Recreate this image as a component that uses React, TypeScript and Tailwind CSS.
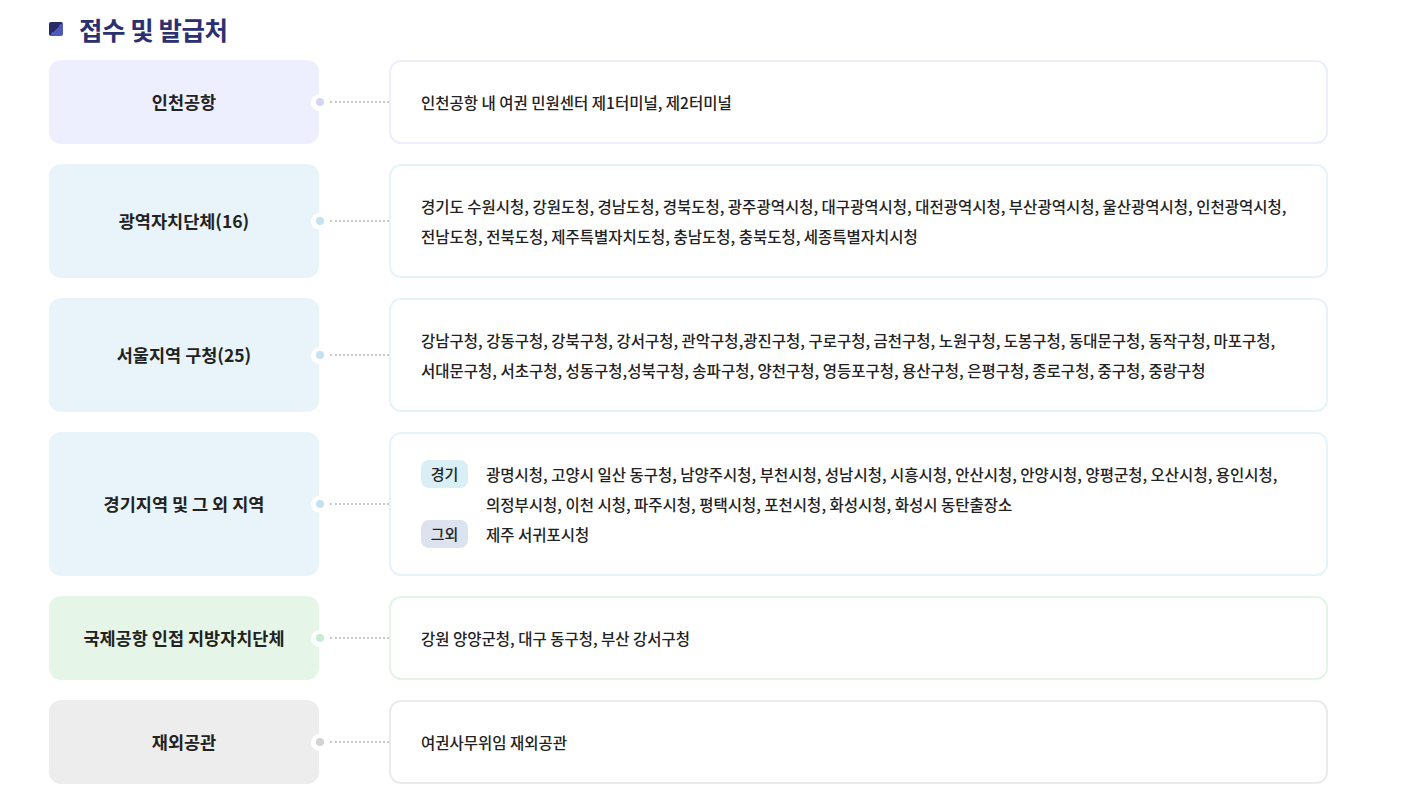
const rows = [
  {
    label: "인천공항",
    box: "bg-[#eeeffe]",
    dot: "bg-[#d4d6f5]",
    border: "border-[#eceefd]",
    lines: ["인천공항 내 여권 민원센터 제1터미널, 제2터미널"],
  },
  {
    label: "광역자치단체(16)",
    box: "bg-[#e8f4f9]",
    dot: "bg-[#c5e3ee]",
    border: "border-[#e6f3f8]",
    lines: [
      "경기도 수원시청, 강원도청, 경남도청, 경북도청, 광주광역시청, 대구광역시청, 대전광역시청, 부산광역시청, 울산광역시청, 인천광역시청,",
      "전남도청, 전북도청, 제주특별자치도청, 충남도청, 충북도청, 세종특별자치시청",
    ],
  },
  {
    label: "서울지역 구청(25)",
    box: "bg-[#e8f4f9]",
    dot: "bg-[#c5e3ee]",
    border: "border-[#e6f3f8]",
    lines: [
      "강남구청, 강동구청, 강북구청, 강서구청, 관악구청,광진구청, 구로구청, 금천구청, 노원구청, 도봉구청, 동대문구청, 동작구청, 마포구청,",
      "서대문구청, 서초구청, 성동구청,성북구청, 송파구청, 양천구청, 영등포구청, 용산구청, 은평구청, 종로구청, 중구청, 중랑구청",
    ],
  },
];

const bottomRows = [
  {
    label: "국제공항 인접 지방자치단체",
    box: "bg-[#e5f5e8]",
    dot: "bg-[#c9ecd1]",
    border: "border-[#e3f5e7]",
    lines: ["강원 양양군청, 대구 동구청, 부산 강서구청"],
  },
  {
    label: "재외공관",
    box: "bg-[#ededed]",
    dot: "bg-[#d3d3d3]",
    border: "border-[#ebebeb]",
    lines: ["여권사무위임 재외공관"],
  },
];

type RowProps = {
  label: string;
  box: string;
  dot: string;
  border: string;
  children: React.ReactNode;
};

const Row = ({ label, box, dot, border, children }: RowProps) => {
  return (
    <div className="flex items-stretch">
      <div className={`w-[270px] shrink-0 rounded-xl flex items-center justify-center text-[17.5px] font-bold text-[#222] ${box}`}>
        {label}
      </div>
      {/* connector */}
      <div className="w-[70px] shrink-0 flex items-center">
        <div className="-ml-[8px] w-[17px] h-[17px] rounded-full bg-white flex items-center justify-center shrink-0">
          <div className={`w-[8px] h-[8px] rounded-full ${dot}`}></div>
        </div>
        <div className="flex-1 ml-[2px] border-t-2 border-dotted border-[#c9c9c9]"></div>
      </div>
      <div className={`flex-1 rounded-xl border-2 bg-white px-[30px] py-[25px] flex items-center ${border}`}>
        {children}
      </div>
    </div>
  );
};

const Lines = ({ lines }: { lines: string[] }) => (
  <p className="text-[15.5px] leading-[30px] font-medium text-[#222]">
    {lines.map((l, i) => (
      <span key={i} className="block whitespace-nowrap">
        {l}
      </span>
    ))}
  </p>
);

export default function App() {
  return (
    <div
      className="min-h-screen bg-white pl-[49px] pt-[11px]"
      style={{ fontFamily: '"Noto Sans CJK KR", "Noto Sans", sans-serif' }}
    >
      <div className="w-[1279px]">
        <h2 className="flex items-center h-[36px] mb-[13px]">
          <span className="w-[14px] h-[14px] rounded-[2px] bg-gradient-to-br from-[#262b68] from-50% to-[#4d58b8] to-50%"></span>
          <span className="ml-[16px] text-[25.5px] font-bold tracking-[-0.5px] text-[#2a3070]">접수 및 발급처</span>
        </h2>

        <div className="flex flex-col gap-5">
          {rows.map((r) => (
            <Row key={r.label} label={r.label} box={r.box} dot={r.dot} border={r.border}>
              <Lines lines={r.lines} />
            </Row>
          ))}

          <Row label="경기지역 및 그 외 지역" box="bg-[#e8f4f9]" dot="bg-[#c5e3ee]" border="border-[#e6f3f8]">
            <div className="flex flex-col">
              <div className="flex items-start">
                <span className="mt-[1px] w-[47px] h-[28px] shrink-0 rounded-lg bg-[#daeef6] flex items-center justify-center text-[15px] font-medium text-[#222]">
                  경기
                </span>
                <div className="ml-[18px]">
                  <Lines
                    lines={[
                      "광명시청, 고양시 일산 동구청, 남양주시청, 부천시청, 성남시청, 시흥시청, 안산시청, 안양시청, 양평군청, 오산시청, 용인시청,",
                      "의정부시청, 이천 시청, 파주시청, 평택시청, 포천시청, 화성시청, 화성시 동탄출장소",
                    ]}
                  />
                </div>
              </div>
              <div className="flex items-start">
                <span className="mt-[1px] w-[47px] h-[28px] shrink-0 rounded-lg bg-[#dde3ee] flex items-center justify-center text-[15px] font-medium text-[#222]">
                  그외
                </span>
                <div className="ml-[18px]">
                  <Lines lines={["제주 서귀포시청"]} />
                </div>
              </div>
            </div>
          </Row>

          {bottomRows.map((r) => (
            <Row key={r.label} label={r.label} box={r.box} dot={r.dot} border={r.border}>
              <Lines lines={r.lines} />
            </Row>
          ))}
        </div>
      </div>
    </div>
  );
}
